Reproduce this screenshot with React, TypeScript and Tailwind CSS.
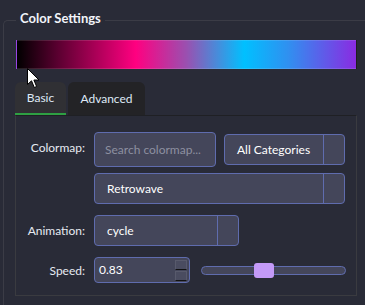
import React from "react";

const font = "font-['Lato',sans-serif]";

const Combo = ({ label, className }: { label: string; className: string }) => (
  <div className={`flex h-[31px] rounded-[4px] border border-[#5f6cae] bg-[#44465a] text-[12px] text-white ${className}`}>
    <div className="flex flex-1 items-center pl-[12px]">{label}</div>
    <div className="w-[21px] border-l border-[#5f6cae]" />
  </div>
);

const Cursor = () => (
  <svg className="absolute left-[27px] top-[68px]" width="13" height="21" viewBox="0 0 13 21">
    <path d="M0.5 0.5 L0.5 16.5 L4.5 12.8 L7.3 19.5 L9.6 18.5 L6.9 12 L12 12 Z" fill="#fff" stroke="#000" strokeWidth="1" />
  </svg>
);

export default function App() {
  return (
    <div className={`relative h-[305px] w-[365px] overflow-hidden bg-[#292b37] ${font}`}>
      <div className="pl-[3px] pt-[20px]">
        <div className="relative h-[300px] w-[380px] rounded-tl-[5px] border-l border-t border-[#3b3c46] pl-[11px] pt-[19px]">
          <span className="absolute -top-[12px] left-[12px] bg-[#292b37] px-[4px] text-[13px] font-bold text-[#f2f4fa]">
            Color Settings
          </span>

          <div className="ml-px h-[29px] w-[341px] border border-[rgba(255,255,255,0.12)] bg-[linear-gradient(90deg,#000000_0%,#5a0030_12%,#ff0080_35%,#9a50b0_50%,#00c0ff_67%,#3090f0_80%,#8a2be2_100%)]" />

          <div className="mt-[13px] flex gap-[2px]">
            <div className="flex h-[33px] w-[51px] items-center justify-center rounded-t-[6px] border-b-2 border-[#2ea043] bg-[#303034] text-[12px] text-[#dfe9f7]">
              Basic
            </div>
            <div className="flex h-[33px] w-[77px] items-center justify-center rounded-t-[6px] bg-[#232326] text-[12px] text-[#dfe9f7]">
              Advanced
            </div>
          </div>

          <div className="flex h-[181px] w-[342px] flex-col border border-[#3a3b40] border-t-[#1f2024] pl-[78px] pr-[10px] pt-[16px]">
            <div className="relative flex gap-[8px]">
              <span className="absolute -left-[70px] top-[7px] w-[61px] text-right text-[12px] text-[#e6eaf2]">Colormap:</span>
              <div className="flex h-[35px] w-[122px] items-center rounded-[4px] border border-[#5f6cae] bg-[#44465a] pl-[10px] text-[12px] text-[#8d90a0]">
                Search colormap...
              </div>
              <Combo label="All Categories" className="mt-[2px] w-[121px]" />
            </div>

            <Combo label="Retrowave" className="mt-[6px] w-[251px]" />

            <div className="relative mt-[11px]">
              <span className="absolute -left-[70px] top-[7px] w-[61px] text-right text-[12px] text-[#e6eaf2]">Animation:</span>
              <Combo label="cycle" className="w-[145px]" />
            </div>

            <div className="relative mt-[11px] flex items-center gap-[11px]">
              <span className="absolute -left-[70px] top-[5px] w-[61px] text-right text-[12px] text-[#e6eaf2]">Speed:</span>
              <div className="flex h-[26px] w-[96px] items-center justify-between rounded-[4px] border border-[#5f6cae] bg-[#44465a] pl-[4px] pr-[2px] text-[12px] text-white">
                <span>0.83</span>
                <div className="flex flex-col gap-px">
                  <div className="h-[10px] w-[12px] border border-[#585a6c] border-b-[#111] bg-[#4a4c60]" />
                  <div className="h-[10px] w-[12px] border border-[#585a6c] border-b-[#111] bg-[#4a4c60]" />
                </div>
              </div>
              <div className="flex h-[15px] w-[145px] items-center">
                <div className="relative h-[9px] w-full rounded-full border border-[#5f6cae] bg-[#44465a]">
                  <div className="absolute -top-[4px] left-[52px] h-[15px] w-[20px] rounded-[3px] bg-[#c49af8]" />
                </div>
              </div>
            </div>
          </div>
        </div>
      </div>
      <Cursor />
    </div>
  );
}
